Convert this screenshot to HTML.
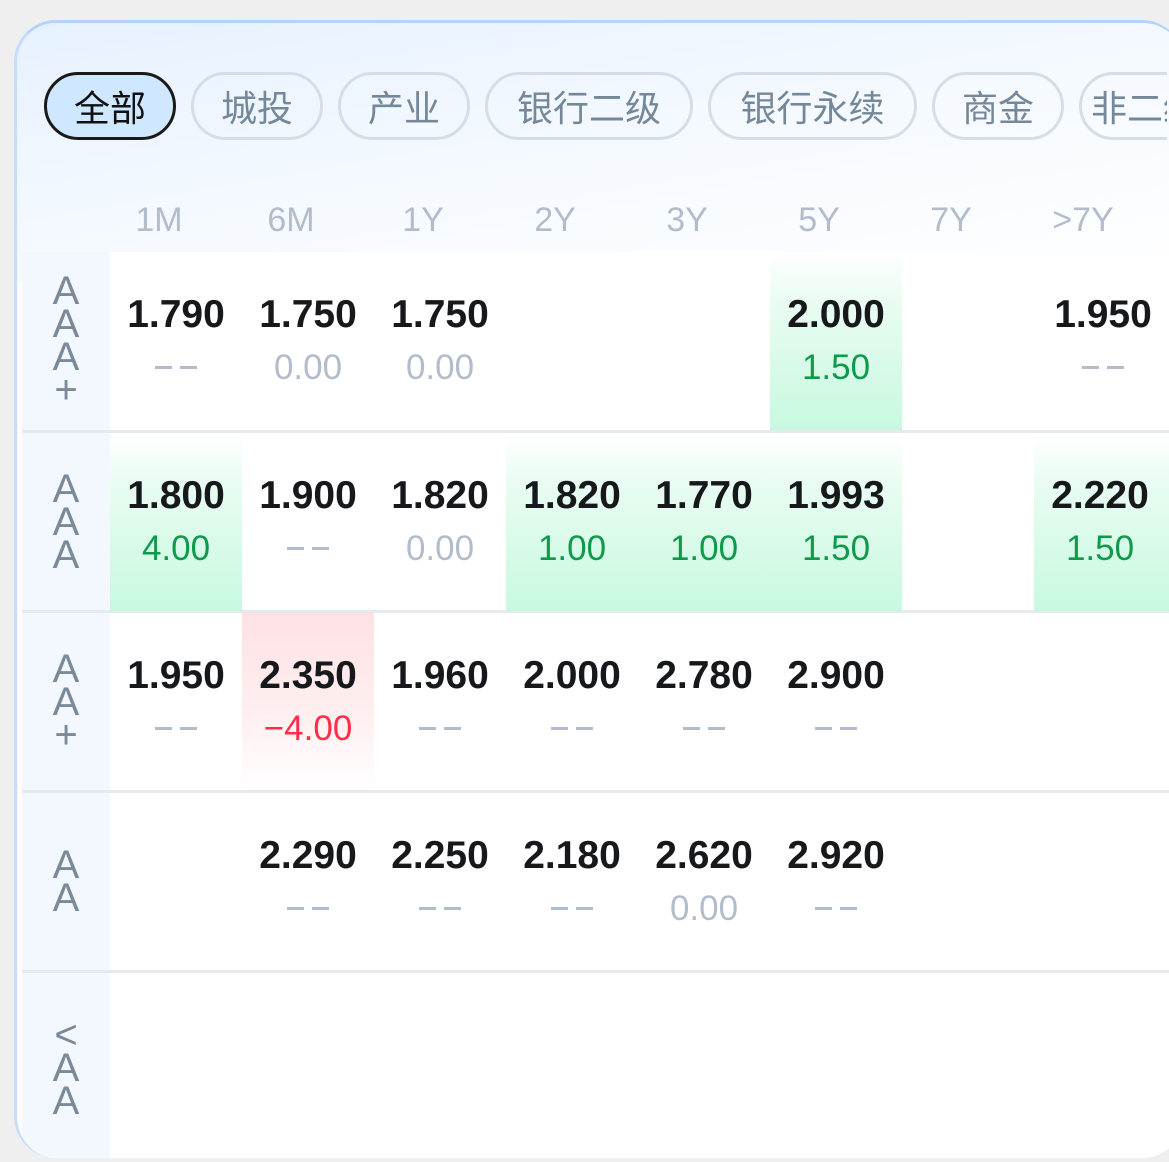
<!DOCTYPE html>
<html><head><meta charset="utf-8"><style>
*{margin:0;padding:0;box-sizing:border-box}
body{width:1169px;height:1162px;background:#efefef;overflow:hidden;position:relative;font-family:"Liberation Sans","Noto Sans CJK SC",sans-serif}
.card{position:absolute;left:14px;top:20px;width:1170px;height:1138px;border-radius:42px;background:#fff;overflow:hidden;border-top:3px solid #b5d3ff;border-left:3px solid #c5dcfb}
.bg{position:absolute;left:0;top:0;right:0;height:260px;background:linear-gradient(170deg,#e6f1ff 0%,#f4f9ff 45%,#ffffff 100%)}
.wh{position:absolute;left:93px;right:0;top:229px;bottom:0;background:#fff}
.tabs{position:absolute;left:0;top:0;width:1150px;height:200px;overflow:hidden}
.tab{position:absolute;top:49px;height:68px;border:3px solid #d5dde6;border-radius:34px;color:#74889a;font-size:36px;line-height:62px;text-align:center;font-family:"Noto Sans CJK SC",sans-serif}
.tab.on{background:#cfe7ff;border-color:#1a1a1a;color:#111}
.hd{position:absolute;top:178px;width:132px;text-align:center;color:#b3bccb;font-size:34px}
.lab{position:absolute;left:5px;width:88px;background:#f3f8fe;color:#7a8a99;font-size:40px;line-height:33px;text-align:center;display:flex;flex-direction:column;justify-content:center}
.sep{position:absolute;left:5px;right:0;height:3px;background:#e6eaee}
.cell{position:absolute;width:132px;height:178px;text-align:center}
.g{background:linear-gradient(180deg,rgba(200,250,225,0) 0%,#e8fcf1 30%,#c8f9e0 100%)}
.r{background:linear-gradient(180deg,#ffe1e4 0%,#fff0f1 60%,rgba(255,255,255,0) 100%)}
.v{position:absolute;left:0;right:0;top:41px;font-size:39px;font-weight:bold;color:#16181c}
.s{position:absolute;left:0;right:0;top:96px;font-size:35px;color:#b3bccb}
.s.gr{color:#0f9a4b}.s.rd{color:#ff2d4a}
.d{position:absolute;left:50%;top:114px;margin-left:-21px;width:42px;height:3px;background:linear-gradient(90deg,#b3bccb 0,#b3bccb 17px,transparent 17px,transparent 25px,#b3bccb 25px)}
</style></head><body>
<div class="card">
<div class="bg"></div>
<div class="wh"></div>
<div class="tabs">
<div class="tab on" style="left:27px;width:132px">全部</div>
<div class="tab" style="left:174px;width:132px">城投</div>
<div class="tab" style="left:321px;width:132px">产业</div>
<div class="tab" style="left:468px;width:208px">银行二级</div>
<div class="tab" style="left:691px;width:209px">银行永续</div>
<div class="tab" style="left:915px;width:132px">商金</div>
<div class="tab" style="left:1062px;width:132px">非二级</div>
</div>
<div class="hd" style="left:76px">1M</div>
<div class="hd" style="left:208px">6M</div>
<div class="hd" style="left:340px">1Y</div>
<div class="hd" style="left:472px">2Y</div>
<div class="hd" style="left:604px">3Y</div>
<div class="hd" style="left:736px">5Y</div>
<div class="hd" style="left:868px">7Y</div>
<div class="hd" style="left:1000px">&gt;7Y</div>

<div class="lab" style="top:229px;height:178px"><span>A</span><span>A</span><span>A</span><span>+</span></div>
<div class="sep" style="top:407px"></div>
<div class="lab" style="top:410px;height:178px"><span>A</span><span>A</span><span>A</span></div>
<div class="sep" style="top:587px"></div>
<div class="lab" style="top:590px;height:178px"><span>A</span><span>A</span><span>+</span></div>
<div class="sep" style="top:767px"></div>
<div class="lab" style="top:770px;height:178px"><span>A</span><span>A</span></div>
<div class="sep" style="top:947px"></div>
<div class="lab" style="top:950px;height:190px"><span>&lt;</span><span>A</span><span>A</span></div>

<div class="cell" style="left:93px;top:229px"><div class="v">1.790</div><div class="d"></div></div>
<div class="cell" style="left:225px;top:229px"><div class="v">1.750</div><div class="s">0.00</div></div>
<div class="cell" style="left:357px;top:229px"><div class="v">1.750</div><div class="s">0.00</div></div>
<div class="cell g" style="left:753px;top:229px"><div class="v">2.000</div><div class="s gr">1.50</div></div>
<div class="cell" style="left:1020px;top:229px"><div class="v">1.950</div><div class="d"></div></div>

<div class="cell g" style="left:93px;top:410px"><div class="v">1.800</div><div class="s gr">4.00</div></div>
<div class="cell" style="left:225px;top:410px"><div class="v">1.900</div><div class="d"></div></div>
<div class="cell" style="left:357px;top:410px"><div class="v">1.820</div><div class="s">0.00</div></div>
<div class="cell g" style="left:489px;top:410px"><div class="v">1.820</div><div class="s gr">1.00</div></div>
<div class="cell g" style="left:621px;top:410px"><div class="v">1.770</div><div class="s gr">1.00</div></div>
<div class="cell g" style="left:753px;top:410px"><div class="v">1.993</div><div class="s gr">1.50</div></div>
<div class="cell g" style="left:1017px;top:410px;width:140px"><div class="v" style="left:-8px">2.220</div><div class="s gr" style="left:-8px">1.50</div></div>

<div class="cell" style="left:93px;top:590px"><div class="v">1.950</div><div class="d"></div></div>
<div class="cell r" style="left:225px;top:590px"><div class="v">2.350</div><div class="s rd">−4.00</div></div>
<div class="cell" style="left:357px;top:590px"><div class="v">1.960</div><div class="d"></div></div>
<div class="cell" style="left:489px;top:590px"><div class="v">2.000</div><div class="d"></div></div>
<div class="cell" style="left:621px;top:590px"><div class="v">2.780</div><div class="d"></div></div>
<div class="cell" style="left:753px;top:590px"><div class="v">2.900</div><div class="d"></div></div>

<div class="cell" style="left:225px;top:770px"><div class="v">2.290</div><div class="d"></div></div>
<div class="cell" style="left:357px;top:770px"><div class="v">2.250</div><div class="d"></div></div>
<div class="cell" style="left:489px;top:770px"><div class="v">2.180</div><div class="d"></div></div>
<div class="cell" style="left:621px;top:770px"><div class="v">2.620</div><div class="s">0.00</div></div>
<div class="cell" style="left:753px;top:770px"><div class="v">2.920</div><div class="d"></div></div>
</div>
</body></html>
